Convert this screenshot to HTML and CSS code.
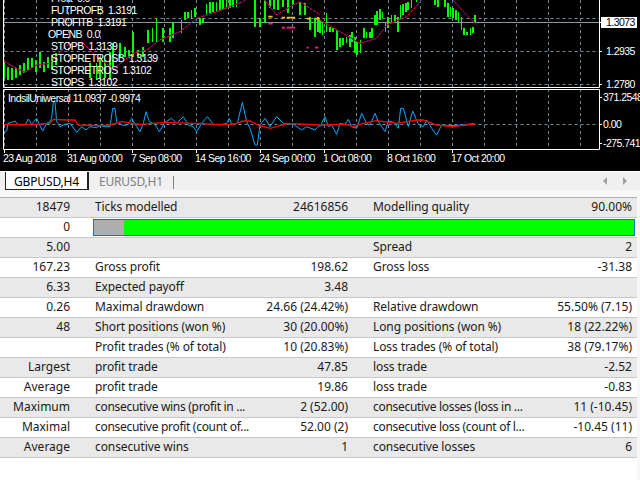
FILE: index.html
```html
<!DOCTYPE html>
<html lang="en">
<head>
  <meta charset="UTF-8">
  <title>Strategy Tester Report</title>
  <link rel="stylesheet" href="styles.css">
</head>
<body>
  <svg class="chart" width="640" height="171" viewBox="0 0 640 171">
    <!-- grid -->
    <path class="grid" d="M4 0V87M36 0V87M68 0V87M100 0V87M132 0V87M164 0V87M196 0V87M228 0V87M260 0V87M292 0V87M324 0V87M356 0V87M388 0V87M420 0V87M452 0V87M484 0V87M516 0V87M548 0V87M580 0V87"/>
    <path class="grid" d="M4 89V149M36 89V149M68 89V149M100 89V149M132 89V149M164 89V149M196 89V149M228 89V149M260 89V149M292 89V149M324 89V149M356 89V149M388 89V149M420 89V149M452 89V149M484 89V149M516 89V149M548 89V149M580 89V149"/>
    <path class="grid" d="M4 18.5H599M4 51.5H599M4 84.5H599M4 124.5H599"/>
    <path class="price-line" d="M4 22.5H600"/>

    <!-- candles, traced at 3x -->
    <g transform="scale(.33333)">
      <path class="bars" d="M12 190V235M24 200V240M36 205V240M48 205V235M60 195V225M72 190V220M84 175V210M96 175V205M108 180V215M120 155V205M132 185V215M144 170V205M156 165V210M168 160V195M270 190V235M290 190V240M300 170V235M315 180V235M330 155V240M340 130V200M360 130V170M375 140V170M388 150V175M400 95V170M415 150V175M430 140V170M445 90V130M458 85V125M470 55V130M490 85V125M510 85V125M520 65V115M545 60V100M555 35V60M565 35V55M575 30V55M585 25V50M600 55V75M610 55V70M620 12V45M630 5V40M640 5V35M650 5V35M660 0V32M670 0V30M680 0V28M690 0V25M700 0V22M710 0V20M765 0V80M780 55V80M795 0V70M810 0V25M822 0V28M835 0V30M850 0V20M865 0V40M880 0V15M900 5V45M915 10V45M930 50V90M945 55V110M955 50V95"/>
      <path class="ma-blue" d="M12 183L40 200L75 217L110 195L150 190L200 135L250 130L290 170L340 207L400 160L440 150L480 120L540 95L590 55L650 35L730 5L745 -5M790 -5L830 45L870 20L900 5L960 45"/>
      <path class="ma-red" d="M12 183L40 200L75 217L110 195L150 190L200 135L250 130L290 170L340 207L400 160L440 150L480 120L540 95L590 55L650 35L730 5L745 -5M790 -5L830 45L870 20L900 5L960 45"/>
      <path class="mark-yellow" d="M805 50H818M845 53H855M860 53H885M920 56H930M945 56H960"/>
      <path class="mark-pink" d="M805 71H818M845 83H855M860 83H885M920 143H926M945 143H955"/>
    </g>
    <g transform="translate(320) scale(.33333)">
      <path class="bars" d="M0 60V100M8 70V105M20 40V95M30 80V95M40 85V95M52 90V150M60 115V140M70 115V135M80 110V130M90 105V140M97 95V125M105 110V160M112 125V165M122 120V160M132 85V115M140 95V115M150 95V115M157 85V115M165 45V75M172 32V75M180 28V60M188 35V55M197 65V95M205 50V85M215 45V70M225 45V70M235 50V95M242 15V60M250 12V45M258 8V35M265 5V30M275 0V25M290 0V5M345 0V15M355 0V20M375 0V20M385 10V50M392 20V50M400 25V55M408 30V60M416 35V65M425 50V90M433 85V105M442 95V105M452 85V105M460 80V100M465 45V70"/>
      <path class="ma-blue" d="M0 60L60 95L120 130L170 115L200 75L260 50L310 -5M395 -5L430 35L470 75"/>
      <path class="ma-red" d="M0 60L60 95L120 130L170 115L200 75L260 50L310 -5M395 -5L430 35L470 75"/>
    </g>

    <!-- indicator window, traced at 3x -->
    <g transform="translate(0 85) scale(.33333)">
      <path class="osc-blue" d="M12 140L20 138L24 115L35 112L45 108L55 120L75 120L85 102L95 118L110 100L118 118L128 138L140 115L150 110L155 100L160 50L165 50L170 110L180 125L195 118L210 115L230 142L245 125L258 135L270 125L290 128L300 122L320 125L330 125L338 70L345 70L350 110L370 122L385 118L395 100L410 125L420 140L430 115L438 80L448 110L465 118L478 140L495 112L515 100L530 115L550 95L565 120L580 125L590 140L605 115L622 95L640 118L660 120L680 115L688 100L695 118L712 115L727 52L740 110L750 130L765 180L772 180L780 120L795 100L810 125L830 95L850 115L880 118L905 135L920 125L945 135L960 120"/>
      <path class="osc-red" d="M12 118L100 118L150 115L160 103L200 105L225 105L235 120L300 122L330 120L365 110L400 115L420 118L500 112L580 115L600 115L640 118L700 118L730 108L750 108L775 120L810 130L830 125L860 115L960 120"/>
    </g>
    <g transform="translate(320 85) scale(.33333)">
      <path class="osc-blue" d="M0 125L15 95L25 125L35 120L50 148L60 115L75 118L85 103L95 125L110 130L125 85L140 115L150 120L165 85L175 110L195 140L205 108L220 112L235 130L242 70L250 70L265 125L278 78L295 118L310 125L320 105L335 130L350 150L365 120L385 122L430 120L465 115"/>
      <path class="osc-red" d="M0 122L40 118L80 118L100 125L130 115L170 107L230 115L290 105L310 105L350 120L400 125L465 117"/>
    </g>

    <!-- window frames and ticks -->
    <path class="frame" d="M3.5 0V87.5H599.5V0M3.5 89.5H599.5V149.5H3.5ZM599 22.5H602M599 51.5H602M599 84.5H602M599 97.5H602M599 124.5H602M599 143.5H602"/>
    <path class="frame" d="M4.5 150V153M68.5 150V153M132.5 150V153M196.5 150V153M260.5 150V153M324.5 150V153M388.5 150V153M452.5 150V153"/>

    <!-- labels -->
    <g class="label">
      <text x="51" y="2">Profit  0.0</text>
      <text x="51" y="14">FUTPROFB  1.3191</text>
      <text x="51" y="26">PROFITB  1.3191</text>
      <text x="48" y="38">OPENB  0.0</text>
      <text x="51" y="50">STOPB  1.3139</text>
      <text x="51" y="62">STOPRETROSB  1.3139</text>
      <text x="51" y="74">STOPRETROS  1.3102</text>
      <text x="51" y="86">STOPS  1.3102</text>
      <text x="8" y="102">IndsilUniwersal 11.0937 -0.9974</text>

      <text x="606" y="55">1.2935</text>
      <text x="606" y="88">1.2780</text>
      <text x="603" y="101">371.2548</text>
      <text x="603" y="128">0.00</text>
      <text x="603" y="147">-275.741</text>

      <text x="3" y="162">23 Aug 2018</text>
      <text x="67" y="162">31 Aug 00:00</text>
      <text x="131" y="162">7 Sep 08:00</text>
      <text x="195" y="162">14 Sep 16:00</text>
      <text x="259" y="162">24 Sep 00:00</text>
      <text x="323" y="162">1 Oct 08:00</text>
      <text x="387" y="162">8 Oct 16:00</text>
      <text x="451" y="162">17 Oct 20:00</text>
    </g>
    <rect class="price-tag" x="601" y="17" width="36" height="11"/>
    <text class="price-tag-text" x="606" y="26">1.3073</text>
  </svg>

  <div class="tabs">
    <div class="tab tab-active">GBPUSD,H4</div>
    <div class="tab">EURUSD,H1</div>
    <div class="tab-sep"></div>
    <div class="tab-arrows">
      <svg width="30" height="10" viewBox="0 0 30 10">
        <path d="M4 1V9L0 5ZM20 1V9L24 5Z"/>
      </svg>
    </div>
  </div>

  <div class="report">
    <div class="row"><div class="num">18479</div><div class="name">Ticks modelled</div><div class="num">24616856</div><div class="name">Modelling quality</div><div class="num">90.00%</div></div>
    <div class="row">
      <div class="num">0</div>
      <div class="quality"><div class="quality-gray"></div><div class="quality-green"></div></div>
    </div>
    <div class="row"><div class="num">5.00</div><div></div><div></div><div class="name">Spread</div><div class="num">2</div></div>
    <div class="row"><div class="num">167.23</div><div class="name">Gross profit</div><div class="num">198.62</div><div class="name">Gross loss</div><div class="num">-31.38</div></div>
    <div class="row"><div class="num">6.33</div><div class="name">Expected payoff</div><div class="num">3.48</div><div></div><div></div></div>
    <div class="row"><div class="num">0.26</div><div class="name">Maximal drawdown</div><div class="num">24.66 (24.42%)</div><div class="name">Relative drawdown</div><div class="num">55.50% (7.15)</div></div>
    <div class="row"><div class="num">48</div><div class="name">Short positions (won %)</div><div class="num">30 (20.00%)</div><div class="name">Long positions (won %)</div><div class="num">18 (22.22%)</div></div>
    <div class="row"><div class="num"></div><div class="name">Profit trades (% of total)</div><div class="num">10 (20.83%)</div><div class="name">Loss trades (% of total)</div><div class="num">38 (79.17%)</div></div>
    <div class="row"><div class="num">Largest</div><div class="name">profit trade</div><div class="num">47.85</div><div class="name">loss trade</div><div class="num">-2.52</div></div>
    <div class="row"><div class="num">Average</div><div class="name">profit trade</div><div class="num">19.86</div><div class="name">loss trade</div><div class="num">-0.83</div></div>
    <div class="row"><div class="num">Maximum</div><div class="name tight">consecutive wins (profit in ...</div><div class="num">2 (52.00)</div><div class="name tight">consecutive losses (loss in ...</div><div class="num">11 (-10.45)</div></div>
    <div class="row"><div class="num">Maximal</div><div class="name tight">consecutive profit (count of...</div><div class="num">52.00 (2)</div><div class="name tight">consecutive loss (count of l...</div><div class="num">-10.45 (11)</div></div>
    <div class="row"><div class="num">Average</div><div class="name">consecutive wins</div><div class="num">1</div><div class="name">consecutive losses</div><div class="num">6</div></div>
  </div>
</body>
</html>
```
FILE: styles.css
```css
html, body {
  margin: 0;
  padding: 0;
  height: 480px;
  overflow: hidden;
  background-color: #f7f7f7;
}
body {
  font-family: "Noto Sans", sans-serif;
  font-size: 12px;
  color: #1a1a1a;
}
.chart {
  display: block;
  background-color: #000;
}
.grid {
  fill: none;
  stroke: #778899;
  stroke-width: 1;
  stroke-dasharray: 3 3;
  transform: translate(.5px, 0);
}
.price-line {
  stroke: #8a98a6;
  stroke-width: 1;
}
.bars {
  fill: none;
  stroke: #00ff00;
  stroke-width: 5;
  shape-rendering: crispEdges;
}
.ma-blue {
  fill: none;
  stroke: #0000c8;
  stroke-width: 3;
}
.ma-red {
  fill: none;
  stroke: #ff0000;
  stroke-width: 3;
  stroke-dasharray: 9 3;
}
.mark-yellow {
  stroke: #ffc000;
  stroke-width: 5;
}
.mark-pink {
  stroke: #ff1a8c;
  stroke-width: 5;
}
.osc-blue {
  fill: none;
  stroke: #00aaff;
  stroke-width: 3;
}
.osc-red {
  fill: none;
  stroke: #ff0000;
  stroke-width: 4;
}
.frame {
  fill: none;
  stroke: #fff;
  stroke-width: 1;
}
.label text,
.price-tag-text {
  font-family: "Liberation Sans", sans-serif;
  font-size: 10.5px;
  letter-spacing: -.55px;
  white-space: pre;
}
.label text {
  fill: #fff;
}
.price-tag {
  fill: #fff;
}
.price-tag-text {
  fill: #000;
}
.tabs {
  display: flex;
  align-items: flex-start;
  height: 18px;
  padding-left: 5px;
  background-color: #f0f0f0;
  border-top: 1px solid #fff;
  color: #808080;
}
.tab {
  width: 84px;
  height: 18px;
  line-height: 19px;
  text-align: center;
  letter-spacing: -.15px;
  box-sizing: border-box;
}
.tab-active {
  background-color: #fff;
  color: #000;
  border-left: 1px solid #222;
  border-right: 2px solid #222;
  border-bottom: 1px solid #222;
}
.tab-sep {
  width: 1px;
  height: 13px;
  margin-top: 4px;
  background-color: #808080;
}
.tab-arrows {
  margin-left: auto;
  margin-right: 7px;
  margin-top: 4px;
}
.tab-arrows svg {
  display: block;
  fill: #a0a0a0;
}
.report {
  margin-top: 7px;
  width: 637px;
  height: 283px;
  box-sizing: border-box;
  background-color: #fff;
  border-top: 1px solid #b0b0b0;
}
.row {
  display: grid;
  grid-template-columns: 75px 170px 108px 165px 119px;
  height: 19px;
  line-height: 18px;
  border-bottom: 1px solid #c8c8c8;
  background-color: #fff;
}
.row:nth-child(odd) {
  background-color: #e9e9e9;
}
.row > div {
  white-space: nowrap;
}
.name {
  padding-left: 20px;
  letter-spacing: -.1px;
}
.tight {
  letter-spacing: -.3px;
}
.num {
  text-align: right;
  padding-right: 5px;
}
.quality {
  grid-column: 2 / 6;
  display: flex;
  height: 17px;
  margin: 1px 2px 0 18px;
  border: 1px solid #0078d7;
  box-sizing: border-box;
}
.quality-gray {
  width: 30px;
  background-color: #aeaeae;
}
.quality-green {
  flex: 1;
  background-color: #00ff00;
}
```
